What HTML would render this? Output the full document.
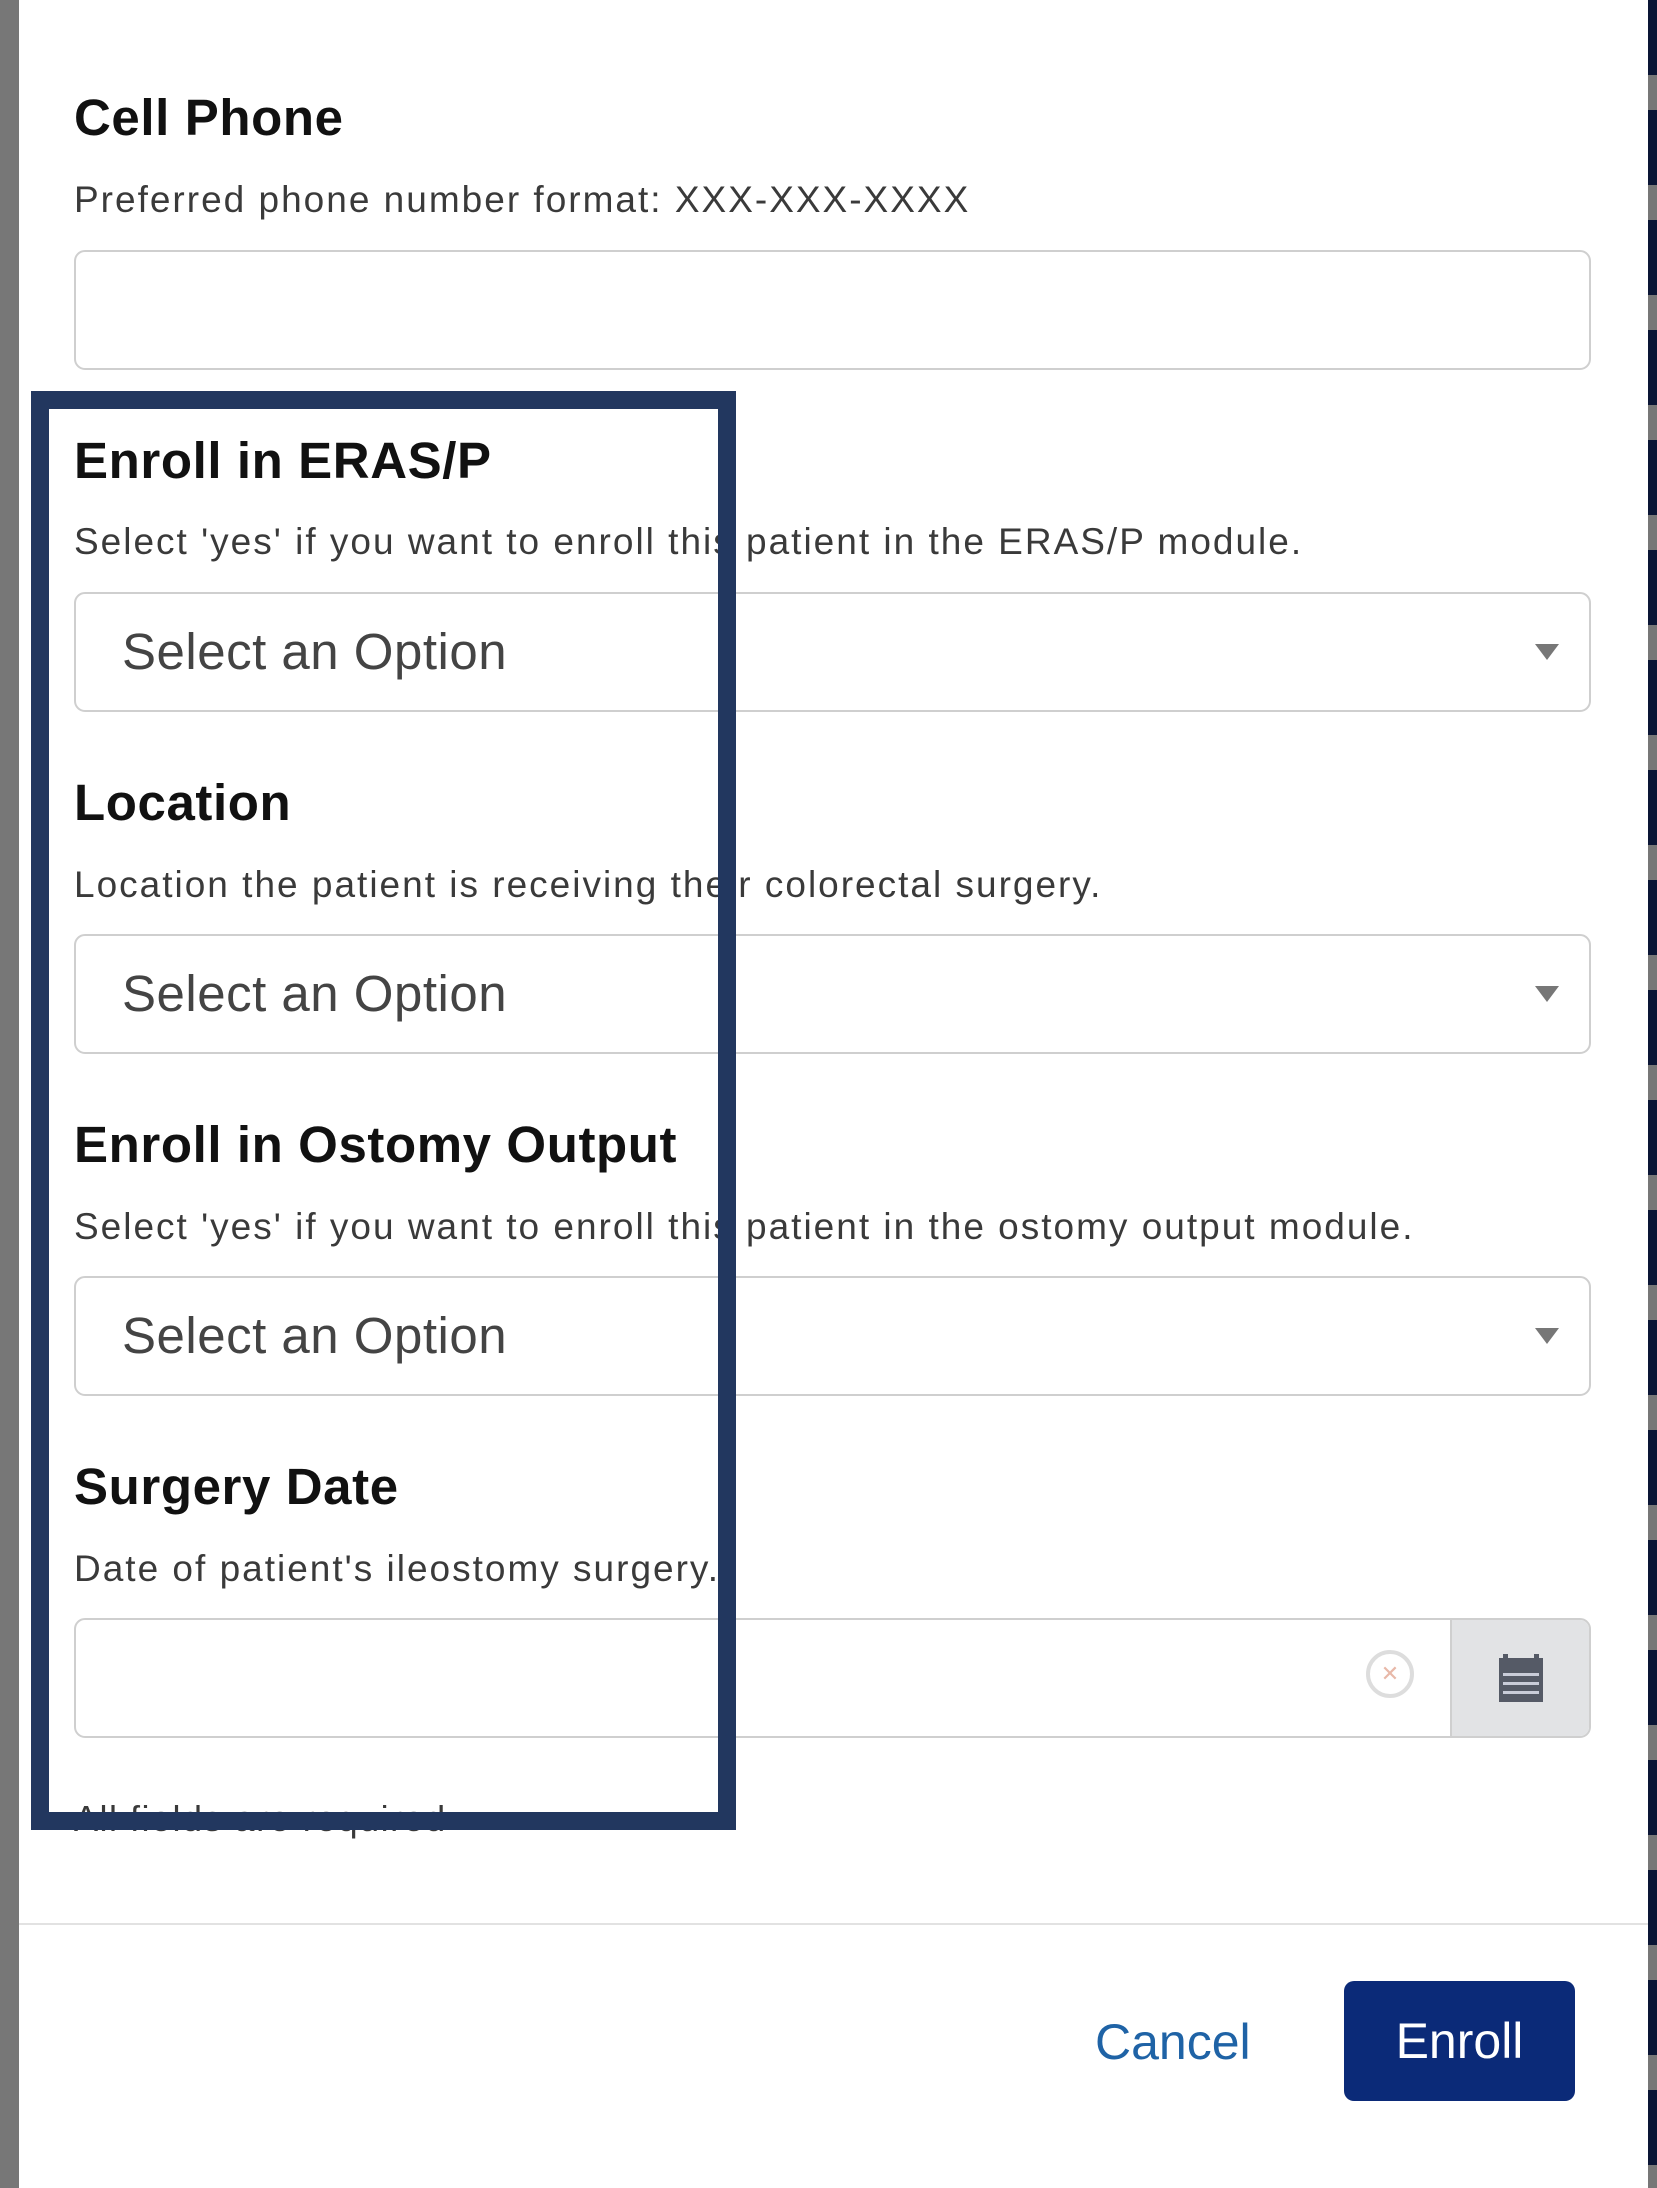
<!DOCTYPE html>
<html><head><meta charset="utf-8"><style>
*{margin:0;padding:0;box-sizing:border-box}
body{width:1657px;height:2188px;position:relative;background:#fff;font-family:"Liberation Sans",sans-serif;overflow:hidden}
.a{position:absolute}
.lbar{left:0;top:0;width:19px;height:2188px;background:#777}
.rbar{left:1648px;top:0;width:9px;height:2188px;background:repeating-linear-gradient(#0a1535 0 75px,#777 75px 110px)}
.card{left:19px;top:0;width:1629px;height:2188px;background:#fff;border-bottom-left-radius:12px}
h2{position:absolute;left:74px;font-size:51px;font-weight:bold;color:#111;white-space:nowrap;letter-spacing:.6px}
.hp{position:absolute;left:74px;font-size:37px;color:#3a3a3a;white-space:nowrap;letter-spacing:2px}
.inp{position:absolute;left:74px;width:1517px;height:120px;border:2px solid #cfcfcf;border-radius:11px;background:#fff}
.sel span{position:absolute;left:46px;top:28px;font-size:51px;color:#444;letter-spacing:.5px}
.sel i{position:absolute;left:1459px;top:50px;width:0;height:0;border-left:12px solid transparent;border-right:12px solid transparent;border-top:16px solid #777}
.box{left:31px;top:391px;width:705px;height:1439px;border:18px solid #22375f;z-index:5}
</style></head><body>
<div class="a lbar"></div>
<div class="a card"></div>
<div class="a rbar"></div>

<h2 style="top:88px">Cell Phone</h2>
<div class="hp" style="top:179px">Preferred phone number format: XXX-XXX-XXXX</div>
<div class="inp" style="top:250px"></div>

<h2 style="top:431px">Enroll in ERAS/P</h2>
<div class="hp" style="top:521px">Select 'yes' if you want to enroll this patient in the ERAS/P module.</div>
<div class="inp sel" style="top:592px"><span>Select an Option</span><i></i></div>

<h2 style="top:773px">Location</h2>
<div class="hp" style="top:864px">Location the patient is receiving their colorectal surgery.</div>
<div class="inp sel" style="top:934px"><span>Select an Option</span><i></i></div>

<h2 style="top:1115px">Enroll in Ostomy Output</h2>
<div class="hp" style="top:1206px">Select 'yes' if you want to enroll this patient in the ostomy output module.</div>
<div class="inp sel" style="top:1276px"><span>Select an Option</span><i></i></div>

<h2 style="top:1457px">Surgery Date</h2>
<div class="hp" style="top:1548px">Date of patient's ileostomy surgery.</div>
<div class="inp" style="top:1618px;overflow:hidden">
  <div class="a" style="left:1290px;top:30px;width:48px;height:48px;border:4px solid #ddd;border-radius:50%;color:#e8b8a8;font-size:22px;text-align:center;line-height:40px">✕</div>
  <div class="a" style="left:1374px;top:0;width:141px;height:116px;background:#e2e3e5;border-left:2px solid #cfcfcf">
    <svg class="a" style="left:45px;top:32px" width="48" height="52" viewBox="0 0 48 52"><rect x="2" y="6" width="44" height="10" fill="#555a66"/><rect x="6" y="2" width="5" height="8" fill="#555a66"/><rect x="37" y="2" width="5" height="8" fill="#555a66"/><rect x="2" y="16" width="44" height="34" fill="#555a66"/><g fill="#c9ccd8"><rect x="6" y="21" width="36" height="3"/><rect x="6" y="30" width="36" height="3"/><rect x="6" y="39" width="36" height="3"/></g></svg>
  </div>
</div>

<div class="hp" style="top:1798px;font-size:36px;letter-spacing:1.5px">All fields are required</div>

<div class="a" style="left:19px;top:1923px;width:1629px;height:2px;background:#e2e2e2"></div>
<div class="a" style="left:1095px;top:2013px;font-size:50px;color:#1f63a6">Cancel</div>
<div class="a" style="left:1344px;top:1981px;width:231px;height:120px;background:#0b2a78;border-radius:10px;color:#fff;font-size:50px;text-align:center;line-height:120px">Enroll</div>

<div class="a box"></div>
</body></html>
